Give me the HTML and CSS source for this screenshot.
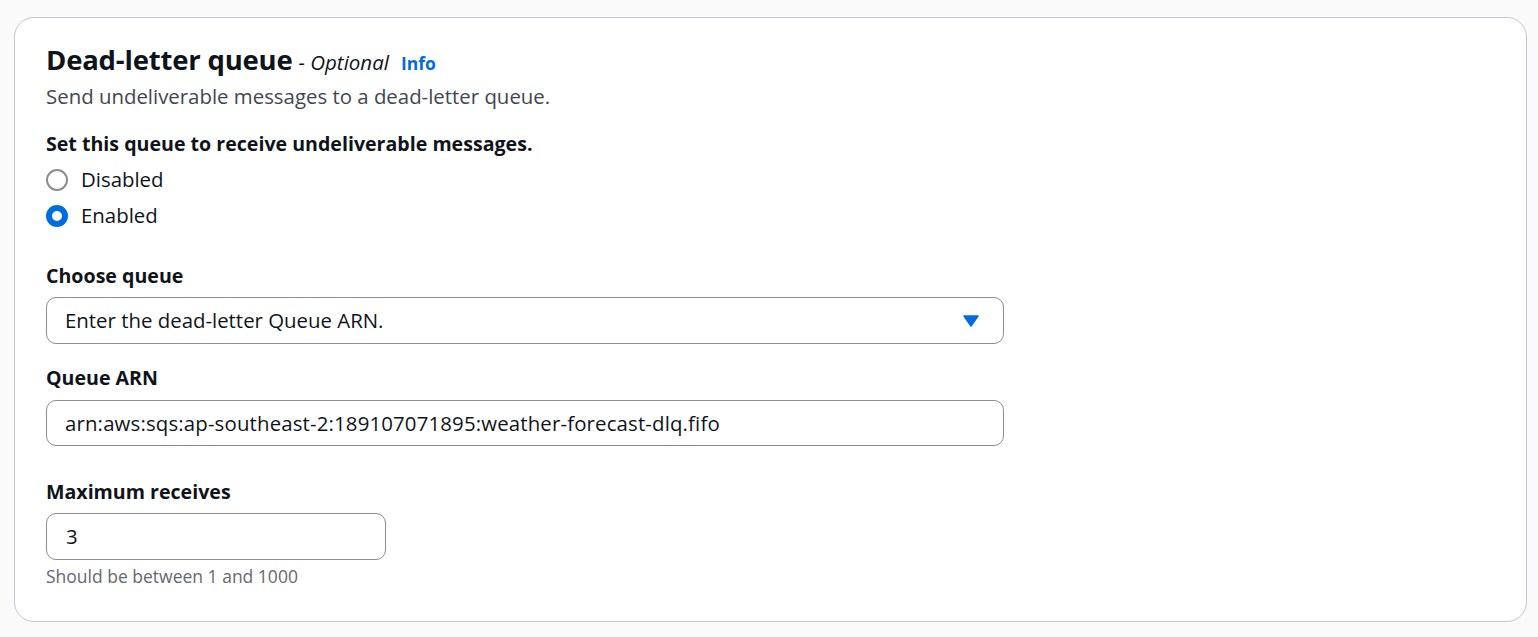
FILE: index.html
```html
<!DOCTYPE html>
<html lang="en">
<head>
<meta charset="utf-8">
<title>Dead-letter queue</title>
<link rel="stylesheet" href="styles.css">
</head>
<body>
<section class="card">
  <header class="card-header">
    <h2 class="title">Dead-letter queue <span class="optional">- Optional</span> <a class="info" href="#">Info</a></h2>
    <p class="desc">Send undeliverable messages to a dead-letter queue.</p>
  </header>

  <div class="field field-radio">
    <div class="label">Set this queue to receive undeliverable messages.</div>
    <div class="radios">
      <label class="radio"><span class="dot"></span><span>Disabled</span></label>
      <label class="radio"><span class="dot checked"></span><span>Enabled</span></label>
    </div>
  </div>

  <div class="field field-select">
    <div class="label">Choose queue</div>
    <div class="control select">
      <span>Enter the dead-letter Queue ARN.</span>
      <svg class="caret" width="16" height="12" viewBox="0 0 16 12"><path d="M1 1 L15 1 L8 11 Z" fill="#006ce0" stroke="#006ce0" stroke-width="1.5" stroke-linejoin="round"/></svg>
    </div>
  </div>

  <div class="field field-arn">
    <div class="label">Queue ARN</div>
    <div class="control input arn">arn:aws:sqs:ap-southeast-2:189107071895:weather-forecast-dlq.fifo</div>
  </div>

  <div class="field field-max">
    <div class="label">Maximum receives</div>
    <div class="control input small">3</div>
    <div class="hint">Should be between 1 and 1000</div>
  </div>
</section>
</body>
</html>
```
FILE: styles.css
```css
* { box-sizing: border-box; }
html, body { margin: 0; padding: 0; }
body {
  background: #fafafa;
  font-family: "Open Sans", "Noto Sans", Arial, sans-serif;
  color: #0f141a;
  font-size: 20.4px;
  line-height: 25px;
  padding: 17px 11px 0 14px;
}
.card {
  width: 1513px;
  height: 605px;
  background: #ffffff;
  border: 1px solid #c6c6cd;
  border-radius: 20px;
  padding: 27px 31px 0 31px;
  display: flex;
  flex-direction: column;
}
.title {
  margin: 0;
  font-size: 27.5px;
  line-height: 30px;
  font-weight: 700;
  letter-spacing: -0.2px;
  display: flex;
  align-items: baseline;
}
.optional {
  font-size: 20.5px;
  font-weight: 400;
  font-style: italic;
  margin-left: 6px;
  letter-spacing: 0;
}
.info {
  font-size: 17.5px;
  font-weight: 700;
  color: #006ce0;
  text-decoration: none;
  margin-left: 12px;
  letter-spacing: 0;
}
.desc {
  margin: 6px 0 0 0;
  color: #424650;
}
.label {
  font-weight: 700;
  font-size: 19.6px;
}
.field-radio { margin-top: 22px; }
.radios {
  display: flex;
  flex-direction: column;
  gap: 11px;
  margin-top: 11px;
}
.radio {
  display: flex;
  align-items: center;
  gap: 13px;
}
.dot {
  width: 22px;
  height: 22px;
  border-radius: 50%;
  border: 2px solid #8c8c94;
  background: #fff;
  flex: none;
}
.dot.checked {
  border: 6.5px solid #006ce0;
}
.field-select { margin-top: 35px; }
.field-arn { margin-top: 21px; }
.field-max { margin-top: 33px; }
.control {
  margin-top: 9px;
  width: 958px;
  height: 47px;
  border: 1px solid #8c8c94;
  border-radius: 10px;
  padding: 0 18px;
  display: flex;
  align-items: center;
  background: #fff;
}
.field-arn .control { margin-top: 10px; height: 46px; }
.arn { letter-spacing: 0.15px; }
.select { justify-content: space-between; padding-right: 24px; }
.caret { display: block; }
.control.small { width: 340px; padding-left: 19px; }
.hint {
  margin-top: 5px;
  font-size: 17.5px;
  line-height: 22px;
  color: #656871;
}
```
